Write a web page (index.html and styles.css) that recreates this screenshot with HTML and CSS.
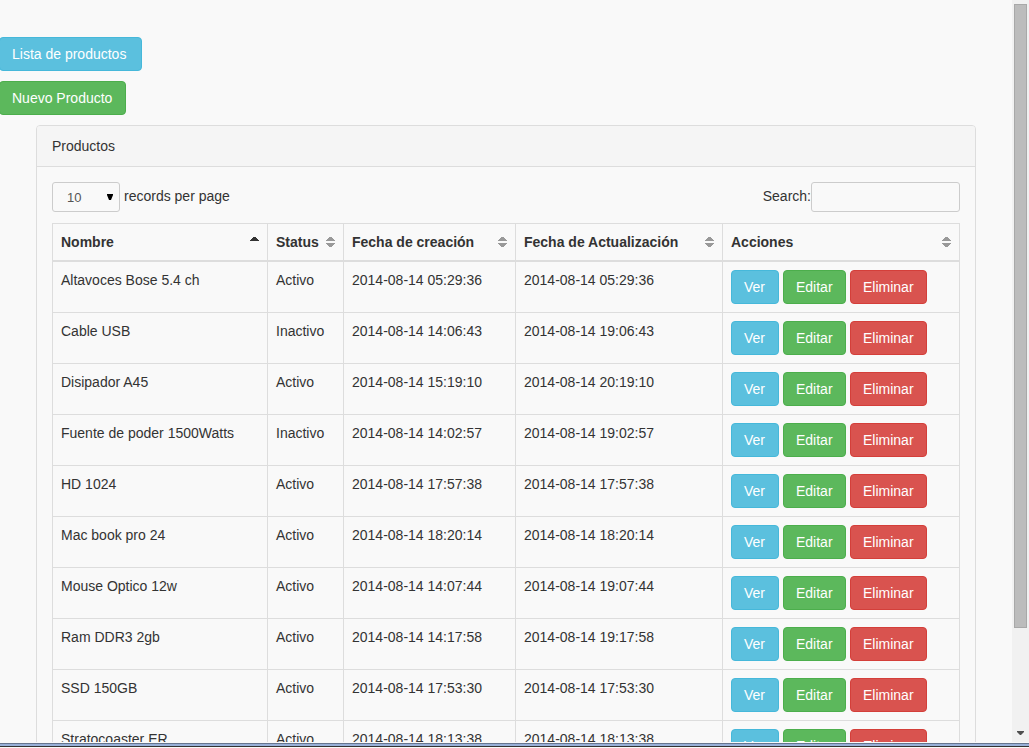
FILE: index.html
```html
<!DOCTYPE html>
<html lang="es">
<head>
<meta charset="utf-8">
<title>Productos</title>
<link rel="stylesheet" href="styles.css">
</head>
<body>
<div class="window">
  <div class="viewport">
    <main class="page">
      <nav class="toolbar">
        <a class="btn btn-info btn-list" href="#lista">Lista de productos</a>
        <a class="btn btn-success btn-new" href="#nuevo">Nuevo Producto</a>
      </nav>
      <section class="panel">
        <header class="panel-heading">Productos</header>
        <div class="panel-body">
          <div class="controls">
            <div class="length">
              <select class="field length-select" id="length"><option>10</option><option>25</option><option>50</option></select>
              <label for="length">records per page</label>
            </div>
            <div class="filter">
              <label for="search">Search:</label><input class="field filter-input" id="search" type="search">
            </div>
          </div>
          <table class="table">
            <colgroup><col class="col-name"><col class="col-status"><col class="col-created"><col class="col-updated"><col class="col-actions"></colgroup>
            <thead>
              <tr>
                <th><div class="head">Nombre<svg class="sort-asc" viewBox="0 0 9 11"><path d="M3 0h3v1h1v1h1v1h1v1H0V3h1V2h1V1h1z"/></svg></div></th>
                <th><div class="head">Status<svg class="sort" viewBox="0 0 9 11"><path d="M3 0h3v1h1v1h1v1h1v1H0V3h1V2h1V1h1zM0 6h9v1H8v1H7v1H6v1H3V9H2V8H1V7H0z"/></svg></div></th>
                <th><div class="head">Fecha de creación<svg class="sort" viewBox="0 0 9 11"><path d="M3 0h3v1h1v1h1v1h1v1H0V3h1V2h1V1h1zM0 6h9v1H8v1H7v1H6v1H3V9H2V8H1V7H0z"/></svg></div></th>
                <th><div class="head">Fecha de Actualización<svg class="sort" viewBox="0 0 9 11"><path d="M3 0h3v1h1v1h1v1h1v1H0V3h1V2h1V1h1zM0 6h9v1H8v1H7v1H6v1H3V9H2V8H1V7H0z"/></svg></div></th>
                <th><div class="head">Acciones<svg class="sort" viewBox="0 0 9 11"><path d="M3 0h3v1h1v1h1v1h1v1H0V3h1V2h1V1h1zM0 6h9v1H8v1H7v1H6v1H3V9H2V8H1V7H0z"/></svg></div></th>
              </tr>
            </thead>
            <tbody>
              <tr><td>Altavoces Bose 5.4 ch</td><td>Activo</td><td>2014-08-14 05:29:36</td><td>2014-08-14 05:29:36</td><td><div class="actions"><a class="btn btn-info" href="#ver">Ver</a><a class="btn btn-success" href="#editar">Editar</a><button class="btn btn-danger" type="button">Eliminar</button></div></td></tr>
              <tr><td>Cable USB</td><td>Inactivo</td><td>2014-08-14 14:06:43</td><td>2014-08-14 19:06:43</td><td><div class="actions"><a class="btn btn-info" href="#ver">Ver</a><a class="btn btn-success" href="#editar">Editar</a><button class="btn btn-danger" type="button">Eliminar</button></div></td></tr>
              <tr><td>Disipador A45</td><td>Activo</td><td>2014-08-14 15:19:10</td><td>2014-08-14 20:19:10</td><td><div class="actions"><a class="btn btn-info" href="#ver">Ver</a><a class="btn btn-success" href="#editar">Editar</a><button class="btn btn-danger" type="button">Eliminar</button></div></td></tr>
              <tr><td>Fuente de poder 1500Watts</td><td>Inactivo</td><td>2014-08-14 14:02:57</td><td>2014-08-14 19:02:57</td><td><div class="actions"><a class="btn btn-info" href="#ver">Ver</a><a class="btn btn-success" href="#editar">Editar</a><button class="btn btn-danger" type="button">Eliminar</button></div></td></tr>
              <tr><td>HD 1024</td><td>Activo</td><td>2014-08-14 17:57:38</td><td>2014-08-14 17:57:38</td><td><div class="actions"><a class="btn btn-info" href="#ver">Ver</a><a class="btn btn-success" href="#editar">Editar</a><button class="btn btn-danger" type="button">Eliminar</button></div></td></tr>
              <tr><td>Mac book pro 24</td><td>Activo</td><td>2014-08-14 18:20:14</td><td>2014-08-14 18:20:14</td><td><div class="actions"><a class="btn btn-info" href="#ver">Ver</a><a class="btn btn-success" href="#editar">Editar</a><button class="btn btn-danger" type="button">Eliminar</button></div></td></tr>
              <tr><td>Mouse Optico 12w</td><td>Activo</td><td>2014-08-14 14:07:44</td><td>2014-08-14 19:07:44</td><td><div class="actions"><a class="btn btn-info" href="#ver">Ver</a><a class="btn btn-success" href="#editar">Editar</a><button class="btn btn-danger" type="button">Eliminar</button></div></td></tr>
              <tr><td>Ram DDR3 2gb</td><td>Activo</td><td>2014-08-14 14:17:58</td><td>2014-08-14 19:17:58</td><td><div class="actions"><a class="btn btn-info" href="#ver">Ver</a><a class="btn btn-success" href="#editar">Editar</a><button class="btn btn-danger" type="button">Eliminar</button></div></td></tr>
              <tr><td>SSD 150GB</td><td>Activo</td><td>2014-08-14 17:53:30</td><td>2014-08-14 17:53:30</td><td><div class="actions"><a class="btn btn-info" href="#ver">Ver</a><a class="btn btn-success" href="#editar">Editar</a><button class="btn btn-danger" type="button">Eliminar</button></div></td></tr>
              <tr><td>Stratocoaster ER</td><td>Activo</td><td>2014-08-14 18:13:38</td><td>2014-08-14 18:13:38</td><td><div class="actions"><a class="btn btn-info" href="#ver">Ver</a><a class="btn btn-success" href="#editar">Editar</a><button class="btn btn-danger" type="button">Eliminar</button></div></td></tr>
            </tbody>
          </table>
        </div>
      </section>
    </main>
    <div class="scrollbar" aria-hidden="true">
      <div class="thumb"></div>
      <svg class="scroll-down" viewBox="0 0 7 4"><path d="M0 0h7v1L4 4H3L0 1z"/></svg>
    </div>
  </div>
  <div class="frame-edge"></div>
</div>
</body>
</html>
```
FILE: styles.css
```css
* { box-sizing: border-box; }
body { margin: 0; background: #f9f9f9; color: #333; font: 14px/20px "Liberation Sans", Arial, sans-serif; }
.window { height: 100vh; display: flex; flex-direction: column; }
.viewport { flex: 1; min-height: 0; display: flex; overflow: hidden; }
.page { flex: 1; min-width: 0; overflow: hidden; padding-top: 37px; }
.toolbar { display: flex; flex-direction: column; align-items: flex-start; gap: 10px; margin-left: -1px; }
.btn { display: inline-block; padding: 6px 12px; border: 1px solid; border-radius: 4px; color: #fff; font: inherit; text-decoration: none; white-space: nowrap; }
.btn-info { min-width: 48px; background: #5bc0de; border-color: #46b8da; }
.btn-success { min-width: 63px; background: #5cb85c; border-color: #4cae4c; }
.btn-danger { background: #d9534f; border-color: #d43f3a; }
.btn-list { min-width: 143px; }
.btn-new { min-width: 127px; }
.panel { margin: 10px 36px 20px; border: 1px solid #ddd; border-radius: 4px; }
.panel-heading { padding: 10px 15px; background: #f5f5f5; border-bottom: 1px solid #ddd; border-radius: 3px 3px 0 0; }
.panel-body { padding: 15px; }
.controls { display: flex; justify-content: space-between; margin-bottom: 11px; }
.length, .filter { display: flex; align-items: center; }
.length { gap: 4px; }
.controls label { padding-bottom: 2px; }
.field { height: 30px; border: 1px solid #ccc; border-radius: 3px; background-color: #f9f9f9; color: #555; font: 13px/20px "Liberation Sans", Arial, sans-serif; }
.length-select { width: 68px; padding: 2px 14px 0; appearance: none; background-image: url("data:image/svg+xml,%3Csvg xmlns='http://www.w3.org/2000/svg' width='6' height='6'%3E%3Cpath d='M0 0h6v1L4 6H2L0 1z'/%3E%3C/svg%3E"); background-repeat: no-repeat; background-position: right 6px center; }
.filter-input { width: 149px; padding: 4px 10px; }
.table { width: 100%; table-layout: fixed; border-collapse: collapse; }
.col-name { width: 215px; }
.col-status { width: 76px; }
.col-created { width: 172px; }
.col-updated { width: 207px; }
th, td { padding: 8px; border: 1px solid #ddd; text-align: left; vertical-align: top; }
th { border-bottom-width: 2px; white-space: nowrap; }
.head { display: flex; align-items: center; justify-content: space-between; }
.sort, .sort-asc { width: 9px; height: 11px; fill: #999; }
.sort-asc { fill: #333; }
.actions { display: flex; gap: 4px; }
.scrollbar { width: 17px; padding: 4px 2px; display: flex; flex-direction: column; align-items: center; background: #f1f1f1; }
.thumb { width: 13px; height: 85%; background: #bcbcbc; border: 1px solid #a8a8a8; }
.scroll-down { width: 7px; height: 4px; margin-top: auto; margin-bottom: 3px; fill: #505050; }
.frame-edge { height: 4px; margin: 1px 0; background: #98b0d8; border-top: 1px solid #66758f; border-bottom: 1px solid #333; }
```
